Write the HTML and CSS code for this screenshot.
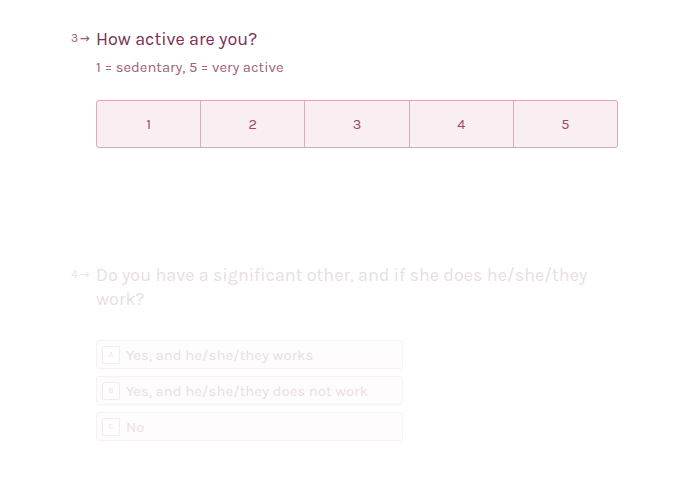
FILE: index.html
```html
<!DOCTYPE html>
<html lang="en">
<head>
  <meta charset="UTF-8">
  <meta name="viewport" content="width=device-width, initial-scale=1.0">
  <title>Survey</title>
  <link rel="stylesheet" href="styles.css">
</head>
<body>
  <main class="form">
    <section class="question active">
      <div class="question-title">
        <span class="number">3<span class="arrow">&#8594;</span></span>
        <h2>How active are you?</h2>
      </div>
      <p class="description">1 = sedentary, 5 = very active</p>
      <div class="scale">
        <button class="scale-item">1</button>
        <button class="scale-item">2</button>
        <button class="scale-item">3</button>
        <button class="scale-item">4</button>
        <button class="scale-item">5</button>
      </div>
    </section>

    <section class="question faded">
      <div class="question-title">
        <span class="number">4<span class="arrow">&#8594;</span></span>
        <h2>Do you have a significant other, and if she does he/she/they work?</h2>
      </div>
      <div class="choices">
        <div class="choice"><span class="key">A</span>Yes, and he/she/they works</div>
        <div class="choice"><span class="key">B</span>Yes, and he/she/they does not work</div>
        <div class="choice"><span class="key">C</span>No</div>
      </div>
    </section>
  </main>
</body>
</html>
```

FILE: styles.css
```css
body {
  margin: 0;
  padding: 0;
  background-color: #ffffff;
  font-family: Karla, Lato, "Noto Sans", Arial, sans-serif;
  color: #7a2f4f;
}

.form {
  padding: 27px 0 0 96px;
  width: 522px;
}

.question-title {
  position: relative;
  display: flex;
}

.number {
  position: absolute;
  left: -25px;
  top: 4px;
  font-size: 12px;
  color: #a05574;
}

.arrow {
  font-size: 10px;
  font-weight: 700;
  margin-left: 2px;
}

.question h2 {
  margin: 0;
  font-size: 18px;
  font-weight: 400;
  line-height: 24px;
  color: #7a2f4f;
}

.description {
  margin: 6px 0 0;
  font-size: 14.8px;
  line-height: 20px;
  color: #a4607c;
}

.scale {
  display: flex;
  margin-top: 23px;
  height: 46px;
  border: 1px solid #dba9bb;
  border-radius: 3px;
  background-color: #f9eef1;
  overflow: hidden;
}

.scale-item {
  flex: 1;
  border: none;
  border-right: 1px solid #dba9bb;
  background: transparent;
  font-family: inherit;
  font-size: 14.5px;
  color: #9c4a6a;
  padding: 0;
}

.scale-item:last-child {
  border-right: none;
}

.faded {
  margin-top: 115px;
  opacity: 0.16;
}

.faded h2 {
  width: 500px;
}

.choices {
  margin-top: 29px;
  width: 307px;
  display: flex;
  flex-direction: column;
  gap: 7px;
}

.choice {
  display: flex;
  align-items: center;
  height: 27px;
  border: 1px solid #d9a6b8;
  border-radius: 3px;
  background-color: #f9eef1;
  font-size: 15px;
  color: #7a2f4f;
  padding-left: 5px;
}

.key {
  display: inline-flex;
  align-items: center;
  justify-content: center;
  width: 16px;
  height: 16px;
  border: 1px solid #c08098;
  border-radius: 2px;
  background: #fff;
  font-size: 8px;
  margin-right: 6px;
}
```
